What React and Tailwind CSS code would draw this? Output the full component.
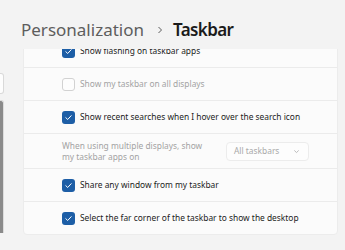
import React from "react";

function Check({ on = true }) {
  if (!on) {
    return <div className="w-[13px] h-[13px] rounded-[3px] border border-[#d2d2d2] bg-[#fdfdfd] shrink-0" />;
  }
  return (
    <div className="w-[13px] h-[13px] rounded-[3px] bg-[#1d5ea6] flex items-center justify-center shrink-0">
      <svg width="9" height="9" viewBox="0 0 10 10" fill="none">
        <path d="M2 5.2 L4.1 7.2 L8 3" stroke="#ffffff" strokeWidth="1.1" strokeLinecap="round" strokeLinejoin="round" />
      </svg>
    </div>
  );
}

function Row({ label, on = true, disabled = false }) {
  return (
    <div className="h-[32px] flex items-center gap-[5px] pl-[38px]">
      <Check on={on} />
      <span className={"whitespace-nowrap " + (disabled ? "text-[#a3a3a3]" : "text-[#1b1b1b]")}>{label}</span>
    </div>
  );
}

const Divider = () => <div className="h-px bg-[#ebebeb]" />;

export default function App() {
  return (
    <div className="w-[345px] h-[250px] bg-[#f3f3f3] flex overflow-hidden font-['Segoe_UI','Noto_Sans',sans-serif] text-[8.4px]">
      {/* clipped nav pane */}
      <div className="w-[4px] shrink-0 flex flex-col pt-[73px]">
        <div className="h-[21px] bg-[#fdfdfd] border-r border-y border-[#d9d9d9] rounded-r-[3px]" />
        <div className="mt-[6px] h-[133px] bg-[#8a8a8a] border-r border-t border-[#dcdcdc] rounded-tr-[3px]" />
      </div>

      <div className="flex-1 flex flex-col min-w-0">
        <div className="h-[49px] shrink-0 flex items-end pl-[17px] pb-[11px] text-[17px] leading-none">
          <span className="text-[#5d5d5d]">Personalization</span>
          <svg className="ml-[13px] mr-[10px] mb-[4px]" width="6" height="8" viewBox="0 0 6 8" fill="none">
            <path d="M1.5 1 L4.5 4 L1.5 7" stroke="#5d5d5d" strokeWidth="1" />
          </svg>
          <span className="text-[#1b1b1b] font-semibold tracking-[-0.6px]">Taskbar</span>
        </div>

        <div className="flex-1 overflow-hidden">
          <div className="-mt-[15px] ml-[19px] w-[315px] bg-[#fbfbfb] rounded-[4px] border border-[#ececec]">
            <Row label="Show flashing on taskbar apps" />
            <Divider />
            <Row label="Show my taskbar on all displays" on={false} disabled />
            <Divider />
            <Row label="Show recent searches when I hover over the search icon" />
            <Divider />
            <div className="h-[34px] flex items-center justify-between pl-[38px] pr-[28px]">
              <div className="text-[#a3a3a3] leading-[11.5px] whitespace-nowrap">
                When using multiple displays, show
                <br />
                my taskbar apps on
              </div>
              <div className="w-[83px] h-[19px] border border-[#ececec] bg-[#fdfdfd] rounded-[4px] flex items-center justify-between pl-[7px] pr-[8px] text-[#a9a9a9]">
                <span>All taskbars</span>
                <svg width="7" height="7" viewBox="0 0 8 8" fill="none">
                  <path d="M1.5 2.8 L4 5.2 L6.5 2.8" stroke="#a9a9a9" strokeWidth="0.9" />
                </svg>
              </div>
            </div>
            <Divider />
            <Row label="Share any window from my taskbar" />
            <Divider />
            <Row label="Select the far corner of the taskbar to show the desktop" />
          </div>
        </div>
      </div>
    </div>
  );
}
